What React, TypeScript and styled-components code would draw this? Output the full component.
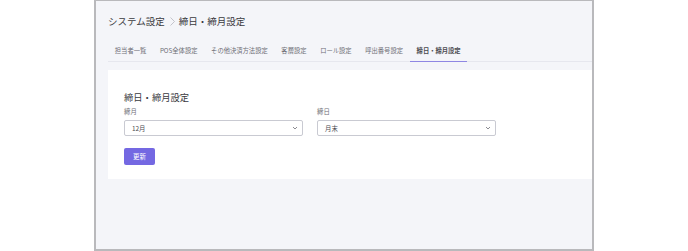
import styled, { createGlobalStyle } from 'styled-components'

const Global = createGlobalStyle`
body {
  margin: 0;
  background: #fff;
  font-family: "Noto Sans CJK JP", "Noto Sans", sans-serif;
}
`

const Page = styled.div`
width: 688px;
height: 251px;
display: flex;
`

const Frame = styled.div`
margin-left: 94px;
width: 500px;
height: 251px;
box-sizing: border-box;
background: #f4f5f9;
border: 2px solid #b9b9bc;
border-top-width: 1px;
padding: 13px 0 0 12px;
display: flex;
flex-direction: column;
`

const Breadcrumb = styled.div`
display: flex;
align-items: center;
height: 14px;
line-height: 14px;
font-size: 9.5px;
color: #3a3a3e;
& > svg {
  margin: 0 4px 0 5px;
}
`

const TabBar = styled.div`
margin-top: 12px;
display: flex;
border-bottom: 1px solid #e6e7ee;
`

const Tab = styled.div<{ $active?: boolean }>`
height: 22px;
line-height: 22px;
padding: 0 6.8px;
font-size: 6.3px;
color: ${p => (p.$active ? '#4a4a50' : '#6e6e76')};
font-weight: ${p => (p.$active ? 700 : 400)};
box-sizing: border-box;
border-bottom: 1px solid ${p => (p.$active ? '#8f87e3' : 'transparent')};
margin-bottom: -1px;
white-space: nowrap;
`

const Card = styled.div`
margin-top: 8px;
background: #fff;
padding: 21px 16px 14px;
`

const CardTitle = styled.div`
font-size: 9.3px;
line-height: 12px;
color: #3a3a3e;
`

const Fields = styled.div`
margin-top: 5px;
display: flex;
gap: 14px;
`

const Field = styled.div`
display: flex;
flex-direction: column;
width: 179px;
`

const Label = styled.div`
font-size: 6.4px;
line-height: 8px;
color: #6e6e76;
margin-bottom: 4px;
`

const Select = styled.div`
height: 16px;
box-sizing: border-box;
border: 1px solid #c9cad2;
border-radius: 2px;
display: flex;
align-items: center;
justify-content: space-between;
padding: 0 4px 0 7px;
font-size: 6.4px;
color: #4a4a50;
`

const Button = styled.button`
margin-top: 12px;
width: 31px;
height: 17px;
border: none;
border-radius: 2px;
background: #7468e2;
color: #fff;
font-family: inherit;
font-size: 6.4px;
padding: 0;
`

const Chevron = () => (
  <svg width="6" height="4" viewBox="0 0 6 4" fill="none">
    <path d="M1 1l2 2 2-2" stroke="#6e6e76" strokeWidth="0.8" />
  </svg>
)

const tabs = ['担当者一覧', 'POS全体設定', 'その他決済方法設定', '客層設定', 'ロール設定', '呼出番号設定', '締日・締月設定']

const App = () => {
  return (
    <>
      <Global />
      <Page>
        <Frame>
          <Breadcrumb>
            システム設定
            <svg width="5" height="9" viewBox="0 0 5 9" fill="none">
              <path d="M0.5 0.5l4 4-4 4" stroke="#b8b8c0" strokeWidth="0.8" />
            </svg>
            締日・締月設定
          </Breadcrumb>
          <TabBar>
            {tabs.map((t, i) => (
              <Tab key={t} $active={i === tabs.length - 1}>{t}</Tab>
            ))}
          </TabBar>
          <Card>
            <CardTitle>締日・締月設定</CardTitle>
            <Fields>
              <Field>
                <Label>締月</Label>
                <Select>12月<Chevron /></Select>
              </Field>
              <Field>
                <Label>締日</Label>
                <Select>月末<Chevron /></Select>
              </Field>
            </Fields>
            <Button>更新</Button>
          </Card>
        </Frame>
      </Page>
    </>
  )
}

export default App
